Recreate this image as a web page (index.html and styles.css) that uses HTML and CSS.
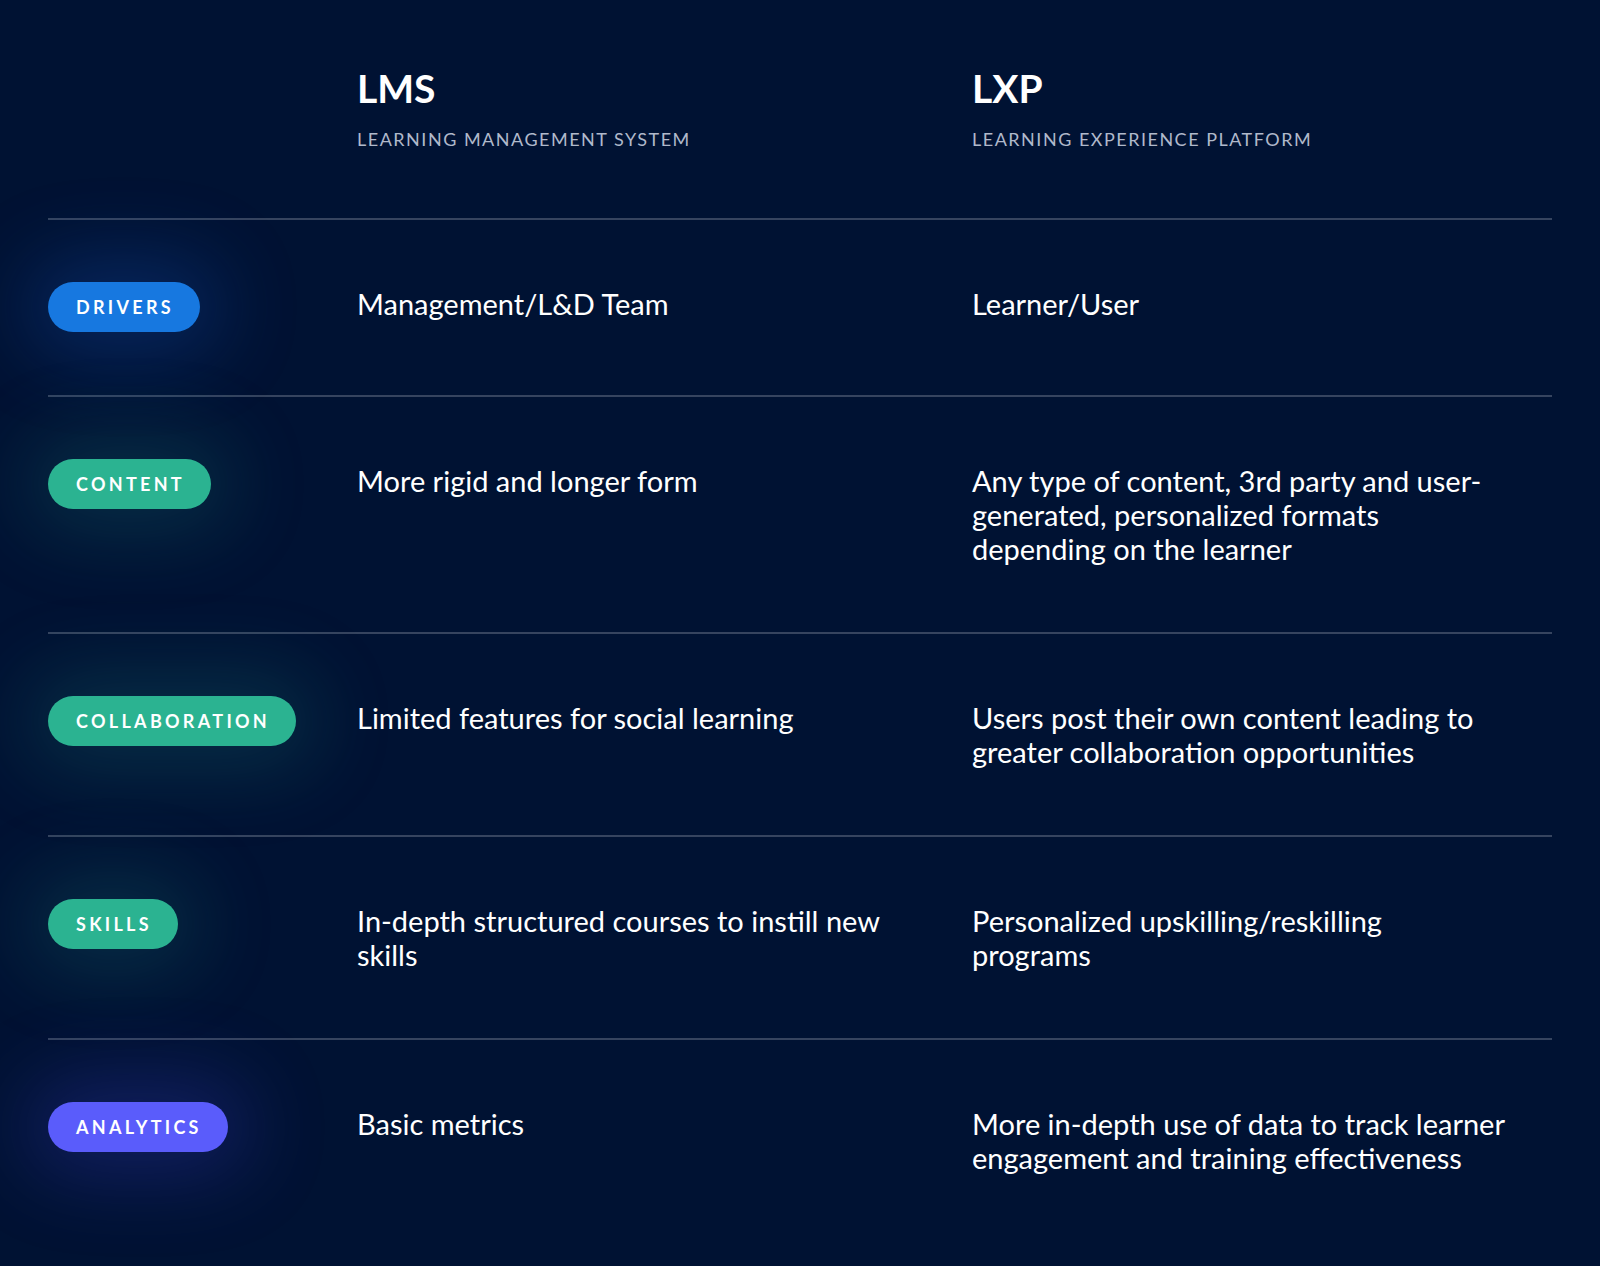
FILE: index.html
```html
<!DOCTYPE html>
<html lang="en">
<head>
<meta charset="utf-8">
<title>LMS vs LXP</title>
<link rel="stylesheet" href="styles.css">
</head>
<body>
<main class="compare">
  <div class="head">
    <div></div>
    <div class="col-head">
      <h2 class="title">LMS</h2>
      <p class="subtitle">LEARNING MANAGEMENT SYSTEM</p>
    </div>
    <div class="col-head">
      <h2 class="title">LXP</h2>
      <p class="subtitle">LEARNING EXPERIENCE PLATFORM</p>
    </div>
  </div>

  <div class="row">
    <div class="label"><span class="pill pill-blue">DRIVERS</span></div>
    <p class="cell">Management/L&amp;D Team</p>
    <p class="cell">Learner/User</p>
  </div>

  <div class="row">
    <div class="label"><span class="pill pill-teal">CONTENT</span></div>
    <p class="cell">More rigid and longer form</p>
    <p class="cell">Any type of content, 3rd party and user-generated, personalized formats depending on the learner</p>
  </div>

  <div class="row">
    <div class="label"><span class="pill pill-teal">COLLABORATION</span></div>
    <p class="cell">Limited features for social learning</p>
    <p class="cell">Users post their own content leading to greater collaboration opportunities</p>
  </div>

  <div class="row">
    <div class="label"><span class="pill pill-teal">SKILLS</span></div>
    <p class="cell">In-depth structured courses to instill new skills</p>
    <p class="cell">Personalized upskilling/reskilling programs</p>
  </div>

  <div class="row">
    <div class="label"><span class="pill pill-violet">ANALYTICS</span></div>
    <p class="cell">Basic metrics</p>
    <p class="cell">More in-depth use of data to track learner engagement and training effectiveness</p>
  </div>
</main>
</body>
</html>
```

FILE: styles.css
```css
* {
  box-sizing: border-box;
}

html, body {
  margin: 0;
  padding: 0;
}

body {
  background: #001233;
  color: #ffffff;
  font-family: "Lato", "Noto Sans", sans-serif;
  min-height: 1266px;
}

.compare {
  padding: 0 48px;
}

.head,
.row {
  display: grid;
  grid-template-columns: 309px 615px 1fr;
}

.head {
  padding: 65px 0 68px;
}

.title {
  margin: 0;
  font-size: 39px;
  line-height: 1.2;
  font-weight: 700;
}

.subtitle {
  margin: 17px 0 0;
  font-size: 18px;
  line-height: 1.2;
  letter-spacing: 1.5px;
  color: #b0b9cb;
}

.row {
  border-top: 2px solid #36445f;
  padding: 62px 0 63px;
}

.label {
  display: flex;
  align-items: flex-start;
}

.pill {
  display: inline-flex;
  align-items: center;
  height: 50px;
  padding: 0 26px 0 28px;
  border-radius: 25px;
  font-size: 18px;
  font-weight: 700;
  letter-spacing: 3.3px;
  color: #ffffff;
}

.pill-blue {
  background: #1778e0;
  box-shadow: 0 0 80px 22px rgba(23, 90, 200, 0.3);
}

.pill-teal {
  background: #2bb391;
  box-shadow: 0 0 80px 22px rgba(30, 150, 140, 0.22);
}

.pill-violet {
  background: #5a5cfb;
  box-shadow: 0 0 80px 22px rgba(70, 70, 230, 0.26);
}

.cell {
  margin: 5px 0 3px;
  padding-right: 40px;
  font-size: 29px;
  line-height: 34px;
}

.cell + .cell {
  padding-right: 47px;
}
```
